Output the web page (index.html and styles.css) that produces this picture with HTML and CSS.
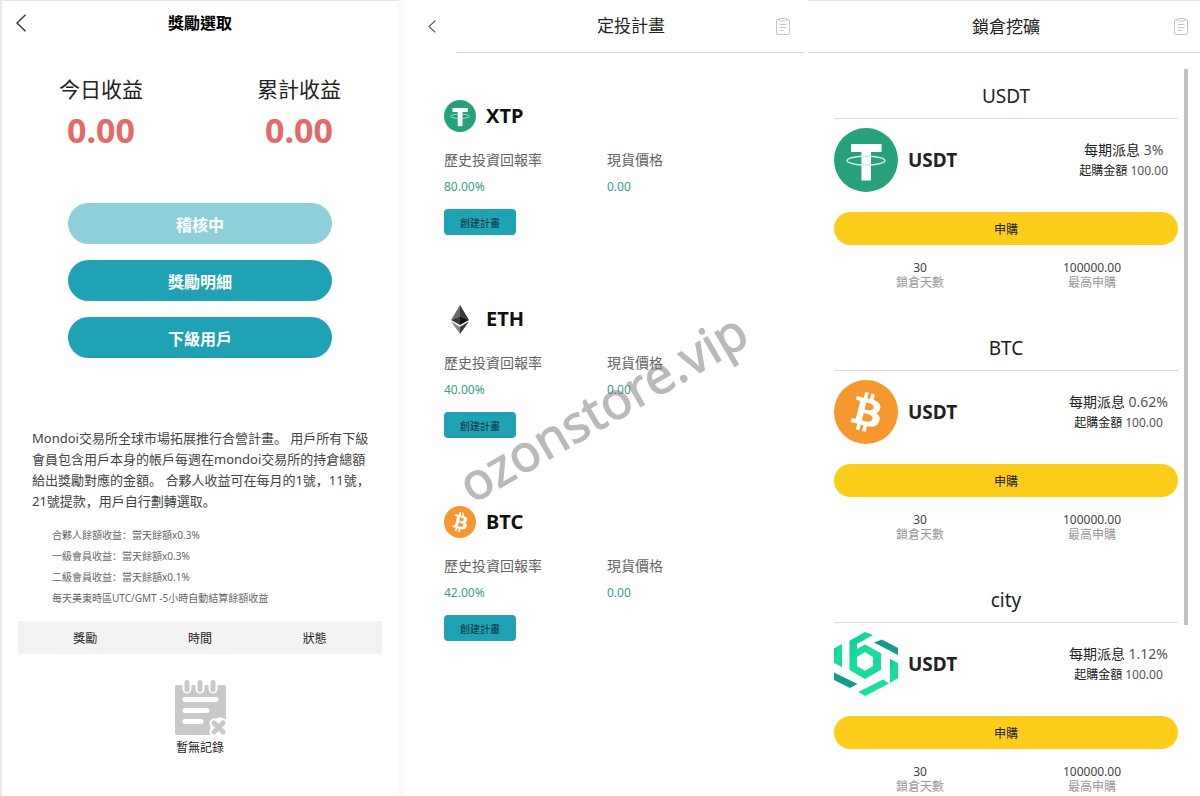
FILE: index.html
```html
<!DOCTYPE html>
<html lang="zh-Hant">
<head>
  <meta charset="UTF-8" />
  <meta name="viewport" content="width=device-width, initial-scale=1.0" />
  <title>Mondoi</title>
  <link rel="stylesheet" href="styles.css">
</head>
<body>
  <!-- shared icons -->
  <svg class="sprite" aria-hidden="true">
    <symbol id="icon-back" viewBox="0 0 10 18">
      <path d="M9.5 .8L1 9l8.500 8.200" fill="none" stroke="#333" stroke-width="1.400" />
    </symbol>
    <symbol id="icon-note" viewBox="0 0 14 17">
      <g fill="none" stroke="#c4c4c4">
        <rect x=".5" y="1.500" width="13" height="15" rx="1.500" />
        <rect x="3.500" y=".5" width="7" height="2.500" rx=".8" fill="#fff" />
        <path d="M3.500 6.500h7M3.500 9.500h7M3.500 12.500h4" />
      </g>
    </symbol>
    <symbol id="icon-usdt" viewBox="0 0 32 32">
      <circle cx="16" cy="16" r="16" fill="#26a17b" />
      <path d="M8.500 8h15.300v4h-5.300v14.200h-4.800V12H8.500z" fill="#fff" />
      <ellipse cx="16" cy="16.300" rx="9.500" ry="2.200" fill="none" stroke="#d3eee4" stroke-width=".7" />
    </symbol>
    <symbol id="icon-btc" viewBox="0 0 32 32">
      <circle cx="16" cy="16" r="16" fill="#f7982f" />
      <path fill="#fff" d="M23.189 14.02c.314-2.096-1.283-3.223-3.465-3.975l.708-2.84-1.728-.43-.69 2.765c-.454-.114-.92-.22-1.385-.326l.695-2.783L15.596 6l-.708 2.839c-.376-.086-.746-.17-1.104-.26l.002-.009-2.384-.595-.46 1.846s1.283.294 1.256.312c.7.175.826.638.805 1.006l-.806 3.235c.048.012.11.03.18.057l-.183-.045-1.130 4.532c-.086.212-.303.531-.793.41.018.025-1.256-.313-1.256-.313l-.858 1.978 2.250.561c.418.105.828.215 1.231.318l-.715 2.872 1.727.43.708-2.840c.472.127.93.245 1.378.357l-.706 2.828 1.728.43.715-2.866c2.948.558 5.164.333 6.097-2.333.752-2.146-.037-3.385-1.588-4.192 1.130-.26 1.980-1.003 2.207-2.538zm-3.950 5.538c-.533 2.147-4.148.986-5.320.695l.95-3.805c1.172.293 4.929.872 4.370 3.110zm.535-5.569c-.487 1.953-3.495.96-4.470.717l.86-3.450c.975.243 4.118.696 3.610 2.733z" />
    </symbol>
    <symbol id="icon-eth" viewBox="0 0 32 32">
      <path d="M16 2l-9 15 9-4z" fill="#6b6b6b" />
      <path d="M16 2l9 15-9-4z" fill="#3a3a3a" />
      <path d="M7 17l9-4v9z" fill="#3c3c3b" />
      <path d="M25 17l-9-4v9z" fill="#141414" />
      <path d="M7 18.500l9 5.200V31z" fill="#8c8c8c" />
      <path d="M25 18.500l-9 5.200V31z" fill="#3c3c3b" />
    </symbol>
    <symbol id="icon-city" viewBox="0 0 64 64">
      <linearGradient id="city-light" x1="0" y1="0" x2="1" y2="1">
        <stop offset="0" stop-color="#12c79a" />
        <stop offset=".5" stop-color="#17e29c" />
        <stop offset="1" stop-color="#1bd0a0" />
      </linearGradient>
      <g fill="url(#city-light)">
        <path fill-rule="evenodd" d="M15.500 8.700L31 0l8 3-16 9v5l8-4.500 16 8.800v16.400L31 47l-15.500-9zM31 20l-8 5v9l8 4.700 8-4.700v-9z" />
        <path d="M0 16.500L8 12v23l-8-4z" />
        <path d="M24.500 60L49 47.500l6 4L31 64z" />
        <path d="M56 27l8 4v15l-8 5z" />
      </g>
      <g fill="#159a8c">
        <path d="M40 10.500L48 7.500l16 8.500v7z" />
        <path d="M0 40.500L23.500 52 16 56 0 48z" />
      </g>
    </symbol>
    <symbol id="icon-empty" viewBox="0 0 51 55">
      <path d="M2 5h47a2 2 0 0 1 2 2v33l-6-3-10 4 1 14H2a2 2 0 0 1-2-2V7a2 2 0 0 1 2-2z" fill="#c9c9c9" />
      <g stroke-linecap="round">
        <path d="M12 3v6M25 3v6M38 3v6" stroke="#fff" stroke-width="9" />
        <path d="M12 2.500v7M25 2.500v7M38 2.500v7" stroke="#c9c9c9" stroke-width="5" />
        <path d="M10 19.500h31M10 30.500h22M10 41.500h16" stroke="#fff" stroke-width="5" />
        <path d="M39 43l9 9M48 43l-9 9" stroke="#fff" stroke-width="9" />
        <path d="M39 43l9 9M48 43l-9 9" stroke="#c9c9c9" stroke-width="5" />
      </g>
    </symbol>
  </svg>

  <main class="screens">
    <section class="screen rewards">
      <header class="rewards-header">
        <a href="#" aria-label="返回"><svg class="back"><use href="#icon-back" /></svg></a>
        <h1>獎勵選取</h1>
      </header>

      <div class="totals">
        <div>
          <p>今日收益</p>
          <strong>0.00</strong>
        </div>
        <div>
          <p>累計收益</p>
          <strong>0.00</strong>
        </div>
      </div>

      <div class="actions">
        <button type="button" class="pending">稽核中</button>
        <button type="button">獎勵明細</button>
        <button type="button">下級用戶</button>
      </div>

      <p class="intro" lang="zh-CN">Mondoi交易所全球市場拓展推行合營計畫。 用戶所有下級會員包含用戶本身的帳戶每週在mondoi交易所的持倉總額給出獎勵對應的金額。 合夥人收益可在每月的1號，11號，21號提款，用戶自行劃轉選取。</p>

      <ul class="rules" lang="zh-CN">
        <li>合夥人餘額收益：當天餘額x0.3%</li>
        <li>一級會員收益：當天餘額x0.3%</li>
        <li>二級會員收益：當天餘額x0.1%</li>
        <li>每天美東時區UTC/GMT -5小時自動結算餘額收益</li>
      </ul>

      <div class="records">
        <table>
          <thead>
            <tr><th>獎勵</th><th>時間</th><th>狀態</th></tr>
          </thead>
        </table>
      </div>
      <div class="empty">
        <svg><use href="#icon-empty" /></svg>
        <p>暫無記錄</p>
      </div>
    </section>

    <section class="screen plans">
      <header class="plans-header">
        <a href="#" aria-label="返回"><svg class="back small"><use href="#icon-back" /></svg></a>
        <div class="bar">
          <h1>定投計畫</h1>
          <a href="#" aria-label="記錄"><svg class="note"><use href="#icon-note" /></svg></a>
        </div>
      </header>

      <div class="plan-list">
        <article class="plan">
          <h2><svg><use href="#icon-usdt" /></svg>XTP</h2>
          <dl>
            <div><dt>歷史投資回報率</dt><dd>80.00%</dd></div>
            <div><dt>現貨價格</dt><dd>0.00</dd></div>
          </dl>
          <button type="button">創建計畫</button>
        </article>
        <article class="plan">
          <h2><svg><use href="#icon-eth" /></svg>ETH</h2>
          <dl>
            <div><dt>歷史投資回報率</dt><dd>40.00%</dd></div>
            <div><dt>現貨價格</dt><dd>0.00</dd></div>
          </dl>
          <button type="button">創建計畫</button>
        </article>
        <article class="plan">
          <h2><svg><use href="#icon-btc" /></svg>BTC</h2>
          <dl>
            <div><dt>歷史投資回報率</dt><dd>42.00%</dd></div>
            <div><dt>現貨價格</dt><dd>0.00</dd></div>
          </dl>
          <button type="button">創建計畫</button>
        </article>
      </div>
      <span class="watermark">ozonstore.vip</span>
    </section>

    <section class="screen mining">
      <header class="mining-header">
        <h1>鎖倉挖礦</h1>
        <a href="#" aria-label="記錄"><svg class="note"><use href="#icon-note" /></svg></a>
      </header>

      <div class="pool-list">
        <article class="pool">
          <h2>USDT</h2>
          <div class="pool-row">
            <svg><use href="#icon-usdt" /></svg>
            <strong>USDT</strong>
            <div class="terms">
              <p>每期派息 <span>3%</span></p>
              <p class="min">起購金額 <span>100.00</span></p>
            </div>
          </div>
          <button type="button">申購</button>
          <dl>
            <div><dt>鎖倉天數</dt><dd>30</dd></div>
            <div><dt>最高申購</dt><dd>100000.00</dd></div>
          </dl>
        </article>
        <article class="pool">
          <h2>BTC</h2>
          <div class="pool-row">
            <svg><use href="#icon-btc" /></svg>
            <strong>USDT</strong>
            <div class="terms">
              <p>每期派息 <span>0.62%</span></p>
              <p class="min">起購金額 <span>100.00</span></p>
            </div>
          </div>
          <button type="button">申購</button>
          <dl>
            <div><dt>鎖倉天數</dt><dd>30</dd></div>
            <div><dt>最高申購</dt><dd>100000.00</dd></div>
          </dl>
        </article>
        <article class="pool">
          <h2>city</h2>
          <div class="pool-row">
            <svg><use href="#icon-city" /></svg>
            <strong>USDT</strong>
            <div class="terms">
              <p>每期派息 <span>1.12%</span></p>
              <p class="min">起購金額 <span>100.00</span></p>
            </div>
          </div>
          <button type="button">申購</button>
          <dl>
            <div><dt>鎖倉天數</dt><dd>30</dd></div>
            <div><dt>最高申購</dt><dd>100000.00</dd></div>
          </dl>
        </article>
        <span class="scrollbar"></span>
      </div>
    </section>
  </main>
</body>
</html>
```

FILE: styles.css
```css
:root {
  --teal: #1fa2b4;
  --teal-light: #8ecfda;
  --yellow: #fecd1b;
  --red: #e46a6a;
  --green: #3d9a8b;
  --text: #222;
  --line: #dcdcdc;
}

* {
  box-sizing: border-box;
  margin: 0;
  padding: 0;
}

body {
  font-family: "Noto Sans", "Noto Sans CJK TC", sans-serif;
  background: #fff;
  color: var(--text);
}

a {
  color: inherit;
}

button {
  border: none;
  font-family: inherit;
  cursor: pointer;
}

svg {
  display: block;
}

ul {
  list-style: none;
}

.sprite {
  position: absolute;
  width: 0;
  height: 0;
}

.screens {
  display: grid;
  grid-template-columns: 400fr 408fr 392fr;
  min-height: 100vh;
}

.back {
  width: 10px;
  height: 18px;
}

.back.small {
  width: 8px;
  height: 13px;
}

.note {
  width: 14px;
  height: 17px;
}

/* rewards */
.rewards {
  border-top: 1px solid #e6e6e6;
  border-left: 2px solid #e9e9e9;
  border-right: 2px solid #fafafa;
}

.rewards-header {
  display: grid;
  grid-template-columns: 1fr auto 1fr;
  align-items: center;
  height: 44px;
  padding: 0 14px;
}

.rewards-header h1 {
  font-size: 16px;
  line-height: 24px;
  color: #000;
}

.totals {
  display: grid;
  grid-template-columns: 1fr 1fr;
  padding-top: 28px;
  text-align: center;
}

.totals p {
  font-size: 21px;
  line-height: 32px;
}

.totals strong {
  display: block;
  font-size: 34px;
  line-height: 50px;
  color: var(--red);
}

.actions {
  display: flex;
  flex-direction: column;
  gap: 16px;
  margin-top: 48px;
  padding: 0 66px;
}

.actions button {
  height: 41px;
  border-radius: 21px;
  background: var(--teal);
  color: #fff;
  font-size: 16px;
  font-weight: 700;
}

.actions .pending {
  background: var(--teal-light);
}

.intro,
.rules {
  font-family: "Noto Sans", "Noto Sans CJK SC", sans-serif;
  line-height: 21px;
}

.intro {
  margin-top: 70px;
  padding: 0 28px 0 30px;
  font-size: 13px;
  color: #444;
}

.rules {
  margin-top: 13px;
  padding: 0 50px;
  font-size: 10px;
  color: #666;
}

.records {
  margin: 12px 16px 0;
  padding: 0 10px;
  background: #f3f3f3;
}

.records table {
  width: 100%;
  table-layout: fixed;
  border-collapse: collapse;
}

.records th {
  height: 33px;
  font-size: 12px;
  font-weight: 400;
}

.empty {
  display: flex;
  flex-direction: column;
  align-items: center;
  gap: 4px;
  margin-top: 26px;
  font-size: 12px;
  line-height: 18px;
}

.empty svg {
  width: 51px;
  height: 55px;
}

/* plans */
.plans {
  position: relative;
  border-left: 4px solid #fafafa;
}

.plans-header {
  display: grid;
  grid-template-columns: 53px 1fr;
  align-items: center;
  padding-right: 3px;
}

.plans-header > a {
  padding-left: 24px;
}

.bar {
  display: grid;
  grid-template-columns: 1fr auto 1fr;
  align-items: center;
  height: 53px;
  padding: 0 15px;
  border-bottom: 1px solid var(--line);
}

.bar h1,
.mining-header h1 {
  grid-column: 2;
  font-size: 17px;
  font-weight: 400;
  line-height: 24px;
}

.bar a,
.mining-header a {
  justify-self: end;
}

.plan-list {
  display: flex;
  flex-direction: column;
  gap: 68px;
  padding: 47px 38px 0 40px;
}

.plan h2 {
  display: flex;
  align-items: center;
  gap: 10px;
  font-size: 20px;
  line-height: 32px;
  color: #111;
}

.plan h2 svg {
  width: 32px;
  height: 32px;
}

.plan dl {
  display: grid;
  grid-template-columns: 1fr 1fr;
  margin-top: 18px;
}

.plan dt {
  font-size: 14px;
  line-height: 20px;
  color: #666;
}

.plan dd {
  margin-top: 7px;
  font-size: 12px;
  line-height: 20px;
  color: var(--green);
}

.plan button {
  display: block;
  width: 72px;
  height: 26px;
  margin-top: 12px;
  border-radius: 4px;
  background: var(--teal);
  color: #12303a;
  font-size: 10px;
}

.watermark {
  position: absolute;
  top: 51%;
  left: 49%;
  transform: translate(-50%, -50%) rotate(-30deg);
  font-size: 51px;
  line-height: 64px;
  color: #777;
  -webkit-text-stroke: 1px #777;
  opacity: 0.5;
  pointer-events: none;
}

/* mining */
.mining {
  border-top: 1px solid #e6e6e6;
}

.mining-header {
  display: grid;
  grid-template-columns: 1fr auto 1fr;
  align-items: center;
  height: 52px;
  padding: 0 12px 0 16px;
  border-bottom: 1px solid var(--line);
}

.pool-list {
  position: relative;
  display: flex;
  flex-direction: column;
  gap: 44px;
  padding: 29px 22px 0 26px;
}

.pool h2 {
  padding-bottom: 8px;
  border-bottom: 1px solid var(--line);
  font-size: 19px;
  font-weight: 400;
  line-height: 28px;
  text-align: center;
}

.pool-row {
  display: flex;
  align-items: center;
  gap: 10px;
  margin-top: 9px;
  padding-right: 10px;
}

.pool-row svg {
  width: 64px;
  height: 64px;
}

.pool-row strong {
  font-size: 19px;
  line-height: 28px;
}

.terms {
  margin-left: auto;
  font-size: 14px;
  line-height: 21px;
  text-align: center;
}

.terms .min {
  font-size: 12px;
}

.terms span {
  color: #555;
}

.pool button {
  display: block;
  width: 100%;
  height: 33px;
  margin-top: 20px;
  border-radius: 17px;
  background: var(--yellow);
  color: #222;
  font-size: 12px;
}

.pool dl {
  display: grid;
  grid-template-columns: 1fr 1fr;
  margin-top: 15px;
  font-size: 12px;
  line-height: 15px;
  text-align: center;
}

.pool dl div {
  display: flex;
  flex-direction: column-reverse;
}

.pool dt {
  color: #999;
}

.pool dd {
  color: #444;
}

.scrollbar {
  position: absolute;
  top: 16px;
  right: 12px;
  width: 4px;
  height: 75%;
  background: #c1c1c1;
}
```
